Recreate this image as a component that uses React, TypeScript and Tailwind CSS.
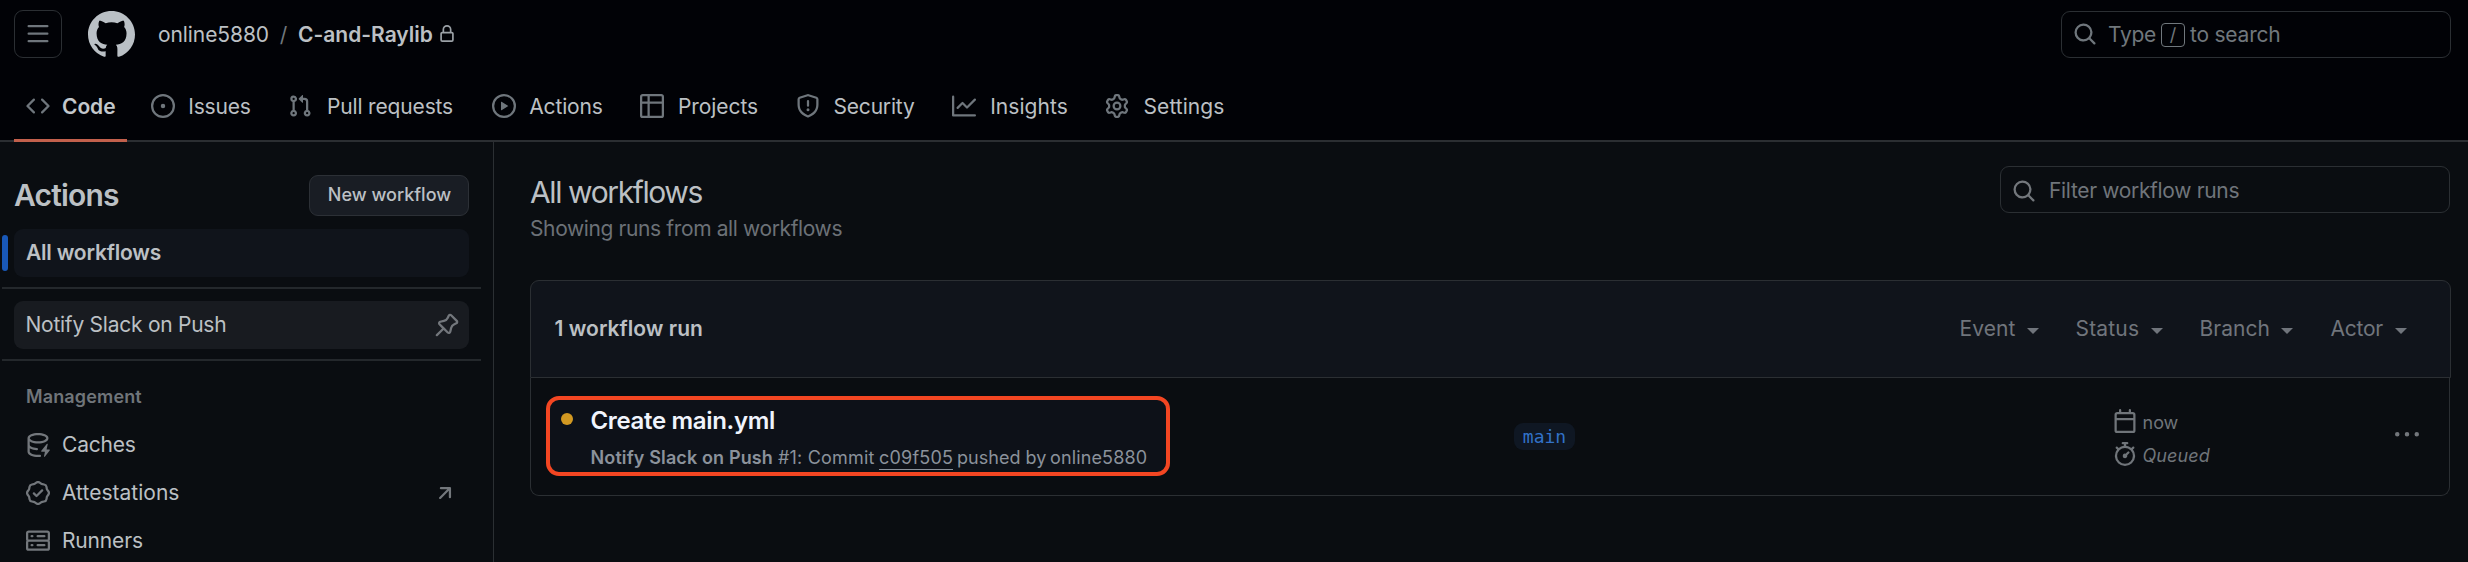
import React from "react";
import type { ReactNode } from "react";

const ICONS = {
  bars: "M1 2.75A.75.75 0 0 1 1.75 2h12.5a.75.75 0 0 1 0 1.5H1.75A.75.75 0 0 1 1 2.75Zm0 5A.75.75 0 0 1 1.75 7h12.5a.75.75 0 0 1 0 1.5H1.75A.75.75 0 0 1 1 7.75ZM1.75 12h12.5a.75.75 0 0 1 0 1.5H1.75a.75.75 0 0 1 0-1.5Z",
  mark: "M8 0c4.42 0 8 3.58 8 8a8.013 8.013 0 0 1-5.45 7.59c-.4.08-.55-.17-.55-.38 0-.27.01-1.13.01-2.2 0-.75-.25-1.23-.54-1.48 1.78-.2 3.65-.88 3.65-3.95 0-.88-.31-1.59-.82-2.15.08-.2.36-1.02-.08-2.12 0 0-.67-.22-2.2.82-.64-.18-1.32-.27-2-.27-.68 0-1.36.09-2 .27-1.53-1.03-2.2-.82-2.2-.82-.44 1.1-.16 1.92-.08 2.12-.51.56-.82 1.28-.82 2.15 0 3.06 1.86 3.75 3.64 3.95-.23.2-.44.55-.51 1.07-.46.21-1.61.55-2.33-.66-.15-.24-.6-.83-1.23-.82-.67.01-.27.38.01.53.34.19.73.9.82 1.13.16.45.68 1.31 2.69.94 0 .67.01 1.3.01 1.49 0 .21-.15.45-.55.38A7.995 7.995 0 0 1 0 8c0-4.42 3.58-8 8-8Z",
  lock: "M4 4a4 4 0 0 1 8 0v2h.25c.966 0 1.75.784 1.75 1.75v5.5A1.75 1.75 0 0 1 12.25 15h-8.5A1.75 1.75 0 0 1 2 13.25v-5.5C2 6.784 2.784 6 3.75 6H4Zm8.25 3.5h-8.5a.25.25 0 0 0-.25.25v5.5c0 .138.112.25.25.25h8.5a.25.25 0 0 0 .25-.25v-5.5a.25.25 0 0 0-.25-.25ZM10.5 6V4a2.5 2.5 0 1 0-5 0v2Z",
  search: "M10.68 11.74a6 6 0 0 1-7.922-8.982 6 6 0 0 1 8.982 7.922l3.04 3.04a.749.749 0 0 1-.326 1.275.749.749 0 0 1-.734-.215ZM11.5 7a4.499 4.499 0 1 0-8.997 0A4.499 4.499 0 0 0 11.5 7Z",
  code: "m11.28 3.22 4.25 4.25a.75.75 0 0 1 0 1.06l-4.25 4.25a.749.749 0 0 1-1.275-.326.749.749 0 0 1 .215-.734L13.94 8l-3.72-3.72a.749.749 0 0 1 .326-1.275.749.749 0 0 1 .734.215Zm-6.56 0a.751.751 0 0 1 1.042.018.751.751 0 0 1 .018 1.042L2.06 8l3.72 3.72a.749.749 0 0 1-.326 1.275.749.749 0 0 1-.734-.215L.47 8.53a.75.75 0 0 1 0-1.06Z",
  issue: "M8 9.5a1.5 1.5 0 1 0 0-3 1.5 1.5 0 0 0 0 3ZM8 0a8 8 0 1 1 0 16A8 8 0 0 1 8 0ZM1.5 8a6.5 6.5 0 1 0 13 0 6.5 6.5 0 0 0-13 0Z",
  pull: "M1.5 3.25a2.25 2.25 0 1 1 3 2.122v5.256a2.251 2.251 0 1 1-1.5 0V5.372A2.25 2.25 0 0 1 1.5 3.25Zm5.677-.177L9.573.677A.25.25 0 0 1 10 .854V2.5h1A2.5 2.5 0 0 1 13.5 5v5.628a2.251 2.251 0 1 1-1.5 0V5a1 1 0 0 0-1-1h-1v1.646a.25.25 0 0 1-.427.177L7.177 3.427a.25.25 0 0 1 0-.354ZM3.75 2.5a.75.75 0 1 0 0 1.5.75.75 0 0 0 0-1.5Zm0 9.5a.75.75 0 1 0 0 1.5.75.75 0 0 0 0-1.5Zm8.25.75a.75.75 0 1 0 1.5 0 .75.75 0 0 0-1.5 0Z",
  play: "M8 0a8 8 0 1 1 0 16A8 8 0 0 1 8 0ZM1.5 8a6.5 6.5 0 1 0 13 0 6.5 6.5 0 0 0-13 0Zm4.879-2.773 4.264 2.559a.25.25 0 0 1 0 .428l-4.264 2.559A.25.25 0 0 1 6 10.559V5.442a.25.25 0 0 1 .379-.215Z",
  table: "M0 1.75C0 .784.784 0 1.75 0h12.5C15.216 0 16 .784 16 1.75v12.5A1.75 1.75 0 0 1 14.25 16H1.75A1.75 1.75 0 0 1 0 14.25ZM6.5 6.5v8h7.75a.25.25 0 0 0 .25-.25V6.5Zm8-1.5V1.75a.25.25 0 0 0-.25-.25H6.5V5Zm-13 1.5v7.75c0 .138.112.25.25.25H5v-8ZM5 5V1.5H1.75a.25.25 0 0 0-.25.25V5Z",
  shield: "M7.467.133a1.748 1.748 0 0 1 1.066 0l5.25 1.68A1.75 1.75 0 0 1 15 3.48V7c0 1.566-.32 3.182-1.303 4.682-.983 1.498-2.585 2.813-5.032 3.855a1.697 1.697 0 0 1-1.33 0c-2.447-1.042-4.049-2.357-5.032-3.855C1.32 10.182 1 8.566 1 7V3.48a1.75 1.75 0 0 1 1.217-1.667Zm.61 1.429a.25.25 0 0 0-.153 0l-5.25 1.68a.25.25 0 0 0-.174.238V7c0 1.358.275 2.666 1.057 3.86.784 1.194 2.121 2.34 4.366 3.297a.196.196 0 0 0 .154 0c2.245-.956 3.582-2.104 4.366-3.298C13.225 9.666 13.5 8.36 13.5 7V3.48a.251.251 0 0 0-.174-.237l-5.25-1.68ZM8.75 4.75v3a.75.75 0 0 1-1.5 0v-3a.75.75 0 0 1 1.5 0ZM9 10.5a1 1 0 1 1-2 0 1 1 0 0 1 2 0Z",
  graph: "M1.5 1.75V13.5h13.75a.75.75 0 0 1 0 1.5H.75a.75.75 0 0 1-.75-.75V1.75a.75.75 0 0 1 1.5 0Zm14.28 2.53-5.25 5.25a.75.75 0 0 1-1.06 0L7 7.06 4.28 9.78a.751.751 0 0 1-1.042-.018.751.751 0 0 1-.018-1.042l3.25-3.25a.75.75 0 0 1 1.06 0L10 7.94l4.72-4.72a.751.751 0 0 1 1.042.018.751.751 0 0 1 .018 1.042Z",
  gear: "M8 0a8.2 8.2 0 0 1 .701.031C9.444.095 9.99.645 10.16 1.29l.288 1.107c.018.066.079.158.212.224.231.114.454.243.668.386.123.082.233.09.299.071l1.103-.303c.644-.176 1.392.021 1.82.63.27.385.506.792.704 1.218.315.675.111 1.422-.364 1.891l-.814.806c-.049.048-.098.147-.088.294.016.257.016.515 0 .772-.01.147.038.246.088.294l.814.806c.475.469.679 1.216.364 1.891a7.977 7.977 0 0 1-.704 1.217c-.428.61-1.176.807-1.82.63l-1.102-.302c-.067-.019-.177-.011-.3.071a5.909 5.909 0 0 1-.668.386c-.133.066-.194.158-.211.224l-.29 1.106c-.168.646-.715 1.196-1.458 1.26a8.006 8.006 0 0 1-1.402 0c-.743-.064-1.289-.614-1.458-1.26l-.289-1.106c-.018-.066-.079-.158-.212-.224a5.738 5.738 0 0 1-.668-.386c-.123-.082-.233-.09-.299-.071l-1.103.303c-.644.176-1.392-.021-1.82-.63a8.12 8.12 0 0 1-.704-1.218c-.315-.675-.111-1.422.363-1.891l.815-.806c.05-.048.098-.147.088-.294a6.214 6.214 0 0 1 0-.772c.01-.147-.038-.246-.088-.294l-.815-.806C.635 6.045.431 5.298.746 4.623a7.92 7.92 0 0 1 .704-1.217c.428-.61 1.176-.807 1.82-.63l1.102.302c.067.019.177.011.3-.071.214-.143.437-.272.668-.386.133-.066.194-.158.211-.224l.29-1.106C6.009.645 6.556.095 7.299.03 7.53.01 7.764 0 8 0Zm-.571 1.525c-.036.003-.108.036-.137.146l-.289 1.105c-.147.561-.549.967-.998 1.189-.173.086-.34.183-.5.29-.417.278-.97.423-1.529.27l-1.103-.303c-.109-.03-.175.016-.195.045-.22.312-.412.644-.573.99-.014.031-.021.11.059.19l.815.806c.411.406.562.957.53 1.456a4.709 4.709 0 0 0 0 .582c.032.499-.119 1.05-.53 1.456l-.815.806c-.081.08-.073.159-.059.19.162.346.353.677.573.989.02.03.085.076.195.046l1.102-.303c.56-.153 1.113-.008 1.53.27.161.107.328.204.501.29.447.222.85.629.997 1.189l.289 1.105c.029.109.101.143.137.146a6.6 6.6 0 0 0 1.142 0c.036-.003.108-.036.137-.146l.289-1.105c.147-.561.549-.967.998-1.189.173-.086.34-.183.5-.29.417-.278.97-.423 1.529-.27l1.103.303c.109.029.175-.016.195-.045.22-.313.411-.644.573-.99.014-.031.021-.11-.059-.19l-.815-.806c-.411-.406-.562-.957-.53-1.456a4.709 4.709 0 0 0 0-.582c-.032-.499.119-1.05.53-1.456l.815-.806c.081-.08.073-.159.059-.19a6.464 6.464 0 0 0-.573-.989c-.02-.03-.085-.076-.195-.046l-1.102.303c-.56.153-1.113.008-1.53-.27a4.44 4.44 0 0 0-.501-.29c-.447-.222-.85-.629-.997-1.189l-.289-1.105c-.029-.11-.101-.143-.137-.146a6.6 6.6 0 0 0-1.142 0ZM11 8a3 3 0 1 1-6 0 3 3 0 0 1 6 0ZM9.5 8a1.5 1.5 0 1 0-3.001.001A1.5 1.5 0 0 0 9.5 8Z",
  pin: "m11.294.984 3.722 3.722a1.75 1.75 0 0 1-.504 2.826l-1.327.613a3.089 3.089 0 0 0-1.707 2.084l-.584 2.454c-.317 1.332-1.972 1.8-2.94.832L5.75 11.311 1.78 15.28a.749.749 0 1 1-1.06-1.06l3.969-3.97-2.204-2.204c-.968-.968-.5-2.623.832-2.94l2.454-.584a3.08 3.08 0 0 0 2.084-1.707l.613-1.327a1.75 1.75 0 0 1 2.826-.504ZM6.283 9.723l2.732 2.731a.25.25 0 0 0 .42-.119l.584-2.454a4.586 4.586 0 0 1 2.537-3.098l1.328-.613a.25.25 0 0 0 .072-.404l-3.722-3.722a.25.25 0 0 0-.404.072l-.613 1.328a4.584 4.584 0 0 1-3.098 2.537l-2.454.584a.25.25 0 0 0-.119.42l2.731 2.732Z",
  cache: "M2.5 5.724V8c0 .248.238.7 1.169 1.159.874.43 2.144.745 3.62.822a.75.75 0 1 1-.078 1.498c-1.622-.085-3.102-.432-4.204-.975a5.565 5.565 0 0 1-.507-.28V12.5c0 .133.058.318.282.551.227.237.591.483 1.101.707 1.015.447 2.47.742 4.117.742.406 0 .802-.018 1.183-.052a.751.751 0 1 1 .134 1.494C8.89 15.98 8.45 16 8 16c-1.805 0-3.475-.32-4.721-.869-.623-.274-1.173-.619-1.579-1.041-.408-.425-.7-.964-.7-1.59v-9c0-.626.292-1.165.7-1.591.406-.42.956-.766 1.579-1.04C4.525.32 6.195 0 8 0c1.806 0 3.476.32 4.721.869.623.274 1.173.619 1.579 1.041.408.425.7.964.7 1.59 0 .626-.292 1.165-.7 1.591-.406.42-.956.766-1.578 1.04C11.475 6.68 9.805 7 8 7c-1.805 0-3.475-.32-4.721-.869a6.15 6.15 0 0 1-.779-.407Zm0-2.224c0 .133.058.318.282.551.227.237.591.483 1.101.707C4.898 5.205 6.353 5.5 8 5.5c1.646 0 3.101-.295 4.118-.742.508-.224.873-.471 1.1-.708.224-.232.282-.417.282-.55 0-.133-.058-.318-.282-.551-.227-.237-.591-.483-1.101-.707C11.102 1.795 9.647 1.5 8 1.5c-1.646 0-3.101.295-4.118.742-.508.224-.873.471-1.1.708-.224.232-.282.417-.282.55ZM14.49 7.582a.375.375 0 0 0-.66-.313l-3.625 4.625a.375.375 0 0 0 .295.606h2.127l-.619 2.922a.375.375 0 0 0 .666.304l3.125-4.125A.375.375 0 0 0 15.5 11h-1.778l.769-3.418Z",
  verified: "m9.585.52.929.68c.153.112.331.186.518.215l1.138.175a2.678 2.678 0 0 1 2.24 2.24l.174 1.139c.029.187.103.365.215.518l.68.928a2.677 2.677 0 0 1 0 3.17l-.68.928a1.174 1.174 0 0 0-.215.518l-.175 1.138a2.678 2.678 0 0 1-2.241 2.241l-1.138.175a1.17 1.17 0 0 0-.518.215l-.928.68a2.677 2.677 0 0 1-3.17 0l-.928-.68a1.174 1.174 0 0 0-.518-.215L3.83 14.41a2.678 2.678 0 0 1-2.24-2.24l-.175-1.138a1.17 1.17 0 0 0-.215-.518l-.68-.928a2.677 2.677 0 0 1 0-3.17l.68-.928c.112-.153.186-.331.215-.518l.175-1.14a2.678 2.678 0 0 1 2.24-2.24l1.139-.175c.187-.029.365-.103.518-.215l.928-.68a2.677 2.677 0 0 1 3.17 0ZM7.303 1.728l-.927.68a2.67 2.67 0 0 1-1.18.489l-1.137.174a1.179 1.179 0 0 0-.987.987l-.174 1.136a2.677 2.677 0 0 1-.489 1.18l-.68.928a1.18 1.18 0 0 0 0 1.394l.68.927c.256.348.424.753.489 1.18l.174 1.137c.078.509.478.909.987.987l1.136.174a2.67 2.67 0 0 1 1.18.489l.928.68c.414.305.979.305 1.394 0l.927-.68a2.67 2.67 0 0 1 1.18-.489l1.137-.174a1.18 1.18 0 0 0 .987-.987l.174-1.136a2.67 2.67 0 0 1 .489-1.18l.68-.928a1.176 1.176 0 0 0 0-1.394l-.68-.927a2.686 2.686 0 0 1-.489-1.18l-.174-1.137a1.179 1.179 0 0 0-.987-.987l-1.136-.174a2.677 2.677 0 0 1-1.18-.489l-.928-.68a1.176 1.176 0 0 0-1.394 0ZM11.28 6.78l-3.75 3.75a.75.75 0 0 1-1.06 0L4.72 8.78a.751.751 0 0 1 .018-1.042.751.751 0 0 1 1.042-.018L7 8.94l3.22-3.22a.751.751 0 0 1 1.042.018.751.751 0 0 1 .018 1.042Z",
  server: "M1.75 1h12.5c.966 0 1.75.784 1.75 1.75v4c0 .372-.116.717-.314 1 .198.283.314.628.314 1v4a1.75 1.75 0 0 1-1.75 1.75H1.75A1.75 1.75 0 0 1 0 12.75v-4c0-.358.109-.707.314-1a1.739 1.739 0 0 1-.314-1v-4C0 1.784.784 1 1.75 1ZM1.5 2.75v4c0 .138.112.25.25.25h12.5a.25.25 0 0 0 .25-.25v-4a.25.25 0 0 0-.25-.25H1.75a.25.25 0 0 0-.25.25Zm.25 5.75a.25.25 0 0 0-.25.25v4c0 .138.112.25.25.25h12.5a.25.25 0 0 0 .25-.25v-4a.25.25 0 0 0-.25-.25ZM7 4.75A.75.75 0 0 1 7.75 4h4.5a.75.75 0 0 1 0 1.5h-4.5A.75.75 0 0 1 7 4.75ZM7.75 10h4.5a.75.75 0 0 1 0 1.5h-4.5a.75.75 0 0 1 0-1.5ZM3 4.75A.75.75 0 0 1 3.75 4h.5a.75.75 0 0 1 0 1.5h-.5A.75.75 0 0 1 3 4.75ZM3.75 10h.5a.75.75 0 0 1 0 1.5h-.5a.75.75 0 0 1 0-1.5Z",
  arrow: "M4.53 4.75A.75.75 0 0 1 5.28 4h6.01a.75.75 0 0 1 .75.75v6.01a.75.75 0 0 1-1.5 0v-4.2l-5.26 5.261a.749.749 0 0 1-1.275-.326.749.749 0 0 1 .215-.734L9.48 5.5h-4.2a.75.75 0 0 1-.75-.75Z",
  calendar: "M4.75 0a.75.75 0 0 1 .75.75V2h5V.75a.75.75 0 0 1 1.5 0V2h1.25c.966 0 1.75.784 1.75 1.75v10.5A1.75 1.75 0 0 1 13.25 16H2.75A1.75 1.75 0 0 1 1 14.25V3.75C1 2.784 1.784 2 2.75 2H4V.75A.75.75 0 0 1 4.75 0ZM2.5 7.5v6.75c0 .138.112.25.25.25h10.5a.25.25 0 0 0 .25-.25V7.5Zm10.75-4H2.75a.25.25 0 0 0-.25.25V6h11V3.75a.25.25 0 0 0-.25-.25Z",
  stopwatch: "M5.75.75A.75.75 0 0 1 6.5 0h3a.75.75 0 0 1 0 1.5h-.75v1l-.001.041a6.724 6.724 0 0 1 3.464 1.435l.007-.006.75-.75a.749.749 0 0 1 1.275.326.749.749 0 0 1-.215.734l-.75.75-.006.007a6.75 6.75 0 1 1-10.548 0L2.72 5.03l-.75-.75a.751.751 0 0 1 .018-1.042.751.751 0 0 1 1.042-.018l.75.75.007.006A6.72 6.72 0 0 1 7.25 2.541V1.5H6.5a.75.75 0 0 1-.75-.75ZM8 14.5a5.25 5.25 0 1 0-.001-10.501A5.25 5.25 0 0 0 8 14.5Zm.389-6.7 1.33-1.33a.75.75 0 1 1 1.061 1.06L9.45 8.861A1.503 1.503 0 0 1 8 10.75a1.499 1.499 0 1 1 .389-2.95Z",
  kebab: "M8 9a1.5 1.5 0 1 0 0-3 1.5 1.5 0 0 0 0 3ZM1.5 9a1.5 1.5 0 1 0 0-3 1.5 1.5 0 0 0 0 3Zm13 0a1.5 1.5 0 1 0 0-3 1.5 1.5 0 0 0 0 3Z",
};

type IconName = keyof typeof ICONS;

function Icon({ name, className = "size-6 text-[#6f767c]" }: { name: IconName; className?: string }) {
  return (
    <svg viewBox="0 0 16 16" fill="currentColor" fillRule="evenodd" className={`block shrink-0 ${className}`} aria-hidden="true">
      <path d={ICONS[name]} />
    </svg>
  );
}

const TABS: { icon: IconName; label: string; box: string; text: string }[] = [
  { icon: "code", label: "Code", box: "w-[53px]", text: "font-semibold tracking-[-0.07px] text-[#c3c8cc]" },
  { icon: "issue", label: "Issues", box: "w-[65px]", text: "tracking-[-0.18px]" },
  { icon: "pull", label: "Pull requests", box: "w-[132px]", text: "tracking-[-0.16px]" },
  { icon: "play", label: "Actions", box: "w-[76px]", text: "tracking-[-0.15px]" },
  { icon: "table", label: "Projects", box: "w-[84px]", text: "tracking-[-0.05px]" },
  { icon: "shield", label: "Security", box: "w-[84px]", text: "tracking-[-0.19px]" },
  { icon: "graph", label: "Insights", box: "w-[81px]", text: "pl-px tracking-[0.05px]" },
  { icon: "gear", label: "Settings", box: "w-[86px]", text: "tracking-[0.05px]" },
];

function Header() {
  return (
    <header className="flex h-[142px] flex-col border-b-2 border-[#2b2e32] bg-[#010206]">
      <div className="flex h-[68px] shrink-0 items-center pl-[14px] pr-[17px]">
        <button className="flex size-12 items-center justify-center rounded-[9px] border border-[#2b2f33]">
          <Icon name="bars" />
        </button>
        <Icon name="mark" className="ml-[25.5px] size-[47px] text-[#bac0c5]" />
        <span className="ml-[23.5px] w-[111px] pt-px tracking-[-0.08px]">online5880</span>
        <span className="ml-[9.5px] w-[10px] pt-px text-center text-[#70777c]">/</span>
        <span className="ml-[9.5px] w-[135px] pt-px font-semibold">C-and-Raylib</span>
        <Icon name="lock" className="ml-[5px] size-[18px] text-[#9ba1a6]" />
        <div className="ml-auto flex h-[47px] w-[390px] items-center rounded-[9px] border border-[#2b2f33] pl-[11px] text-[#70777c]">
          <Icon name="search" />
          <span className="ml-[11px] w-[48px] pt-[2px] tracking-[-0.29px]">Type</span>
          <span className="ml-[5px] mt-[2px] flex h-6 w-6 items-center justify-center rounded-[4px] border border-[#70777c] text-[18px]">/</span>
          <span className="ml-[5px] pt-[2px] tracking-[-0.22px]">to search</span>
        </div>
      </div>
      <nav className="flex h-[74px] shrink-0 gap-3 pl-[14px]">
        {TABS.map((t, i) => (
          <div
            key={t.label}
            className={`flex h-full shrink-0 items-center gap-3 border-b-[3px] px-3 ${i === 0 ? "border-[#c2604c]" : "border-transparent"}`}
          >
            <Icon name={t.icon} className="mb-px mt-[5px] size-6 text-[#6f767c]" />
            <span className={`mt-[6px] text-center ${t.box} ${t.text}`}>{t.label}</span>
          </div>
        ))}
      </nav>
    </header>
  );
}

function NavItem({ icon, label, className, children }: { icon: IconName; label: string; className: string; children?: ReactNode }) {
  return (
    <div className="flex h-12 items-center pl-[26px] pr-[36px]">
      <Icon name={icon} className="size-6 text-[#73777c]" />
      <span className={`ml-[12px] ${className}`}>{label}</span>
      {children}
    </div>
  );
}

function Sidebar() {
  return (
    <aside className="h-[420px] w-[494px] shrink-0 overflow-hidden border-r border-[#2b2f33]">
      <div className="mt-[32px] flex h-[42px] items-center justify-between pl-[14px] pr-6">
        <h2 className="text-[30px] font-semibold tracking-[-0.8px]">Actions</h2>
        <button className="h-[41px] w-40 rounded-[9px] border border-[#2c3036] bg-[#191d24] pl-px text-[18px] font-medium">New workflow</button>
      </div>
      <div className="mt-[13px] flex h-12 items-center pl-[2px] pr-6">
        <span className="h-9 w-[6px] rounded-[3px] bg-[#1958b8]" />
        <span className="ml-[6px] flex h-12 grow items-center rounded-[9px] bg-[#10141b] pl-3 font-semibold tracking-[-0.2px]">All workflows</span>
      </div>
      <div className="ml-[2px] mt-[10px] h-[2px] w-[479px] bg-[#24282c]" />
      <div className="ml-[14px] mr-6 mt-3 flex h-12 items-center justify-between rounded-[9px] bg-[#181b20] pl-[11.5px] pr-[10px]">
        <span className="tracking-[-0.25px]">Notify Slack on Push</span>
        <Icon name="pin" className="size-6 text-[#73777c]" />
      </div>
      <div className="ml-[2px] mt-[10px] h-[2px] w-[479px] bg-[#24282c]" />
      <div className="mt-[20px] flex h-8 items-center pl-[26px] text-[18px] font-semibold tracking-[0.14px] text-[#70757a]">Management</div>
      <div className="mt-2">
        <NavItem icon="cache" label="Caches" className="tracking-[-0.2px]" />
        <NavItem icon="verified" label="Attestations" className="tracking-[0.02px]">
          <Icon name="arrow" className="ml-auto size-6 text-[#73777c]" />
        </NavItem>
        <NavItem icon="server" label="Runners" className="tracking-[-0.17px]" />
      </div>
    </aside>
  );
}

function Filter({ label, box, className = "" }: { label: string; box: string; className?: string }) {
  return (
    <span className={`flex items-center ${className}`}>
      <span className={box}>{label}</span>
      <svg viewBox="0 0 12 6" className="ml-[11px] mt-[3px] h-[6px] w-3 fill-current">
        <path d="M0 0h12L6 6Z" />
      </svg>
    </span>
  );
}

function Runs() {
  return (
    <section className="mt-[35px]">
      <div className="flex h-[98px] w-[1921px] items-center rounded-t-[9px] border border-[#2b2f33] bg-[#10141b] pl-[23.5px]">
        <span className="font-semibold tracking-[0.03px]">1 workflow run</span>
        <div className="ml-auto mr-[43.5px] flex text-[#70757c]">
          <Filter label="Event" box="w-[56px] tracking-[0.09px]" />
          <Filter label="Status" box="w-[64px] tracking-[0.18px]" className="ml-[37px]" />
          <Filter label="Branch" box="w-[70px] tracking-[0.04px]" className="ml-[37px]" />
          <Filter label="Actor" box="w-[53px] tracking-[-0.23px]" className="ml-[38px]" />
        </div>
      </div>
      <div className="flex h-[118px] w-[1920px] items-center rounded-b-[9px] border border-t-0 border-[#2b2f33]">
        <div className="mb-[3px] ml-[15px] mt-[2px] flex h-20 w-[624px] shrink-0 rounded-[13px] border-4 border-[#f34622] bg-[#0d1118]">
          <span className="ml-[11px] mt-[13px] size-3 rounded-full bg-[#d29922]" />
          <div className="ml-[17.5px]">
            <div className="mt-[6px] text-[24px] font-semibold leading-[30px] tracking-[-0.33px] text-[#f0f4fc]">Create main.yml</div>
            <div className="mt-[10px] flex text-[18px] leading-6 text-[#8b929b]">
              <span className="w-[187.5px] font-semibold tracking-[0.13px]">Notify Slack on Push</span>
              <span className="w-[101px] tracking-[0.2px]">#1: Commit</span>
              <span className="h-[24px] w-[74px] border-b border-[#8b929b] tracking-[0.2px]">c09f505</span>
              <span className="ml-[4px] w-[93px] tracking-[0.02px]">pushed by</span>
              <span className="tracking-[0.13px]">online5880</span>
            </div>
          </div>
        </div>
        <span className="ml-[344px] flex h-[27px] w-[61px] items-center justify-center rounded-[9px] bg-[#0f1723] pt-px font-['DejaVu_Sans_Mono',monospace] text-[18px] text-[#3272c8]">main</span>
        <div className="ml-[538px] mt-[3px] flex flex-col gap-[7px] text-[18px] leading-6 text-[#70757a]">
          <span className="flex gap-[5.5px]">
            <Icon name="calendar" className="size-6" />
            <span className="pt-[2px]">now</span>
          </span>
          <span className="flex gap-[5.5px]">
            <Icon name="stopwatch" className="size-6" />
            <span className="pt-[2px] italic tracking-[0.1px]">Queued</span>
          </span>
        </div>
        <Icon name="kebab" className="ml-auto mr-[30px] mb-[3px] size-6 text-[#73777c]" />
      </div>
    </section>
  );
}

export default function App() {
  return (
    <div className="h-[562px] w-[2468px] overflow-hidden whitespace-nowrap bg-[#0a0d11] font-['Inter',sans-serif] text-[21px] leading-8 text-[#bcc0c4]">
      <Header />
      <div className="flex">
        <Sidebar />
        <main className="pl-9 pt-6">
          <div className="flex w-[1921px] items-start justify-between">
            <div>
              <h1 className="mt-[6px] text-[30px] leading-10 tracking-[-1.4px]">All workflows</h1>
              <p className="pt-px tracking-[-0.38px] text-[#6c7177]">Showing runs from all workflows</p>
            </div>
            <div className="mr-px flex h-[47px] w-[450px] items-center rounded-[9px] border border-[#2b2f33] pl-[11px] text-[#70757b]">
              <Icon name="search" className="mt-[3px] size-6 text-[#73777c]" />
              <span className="ml-[13px] pt-[2px] tracking-[-0.33px]">Filter workflow runs</span>
            </div>
          </div>
          <Runs />
        </main>
      </div>
    </div>
  );
}
